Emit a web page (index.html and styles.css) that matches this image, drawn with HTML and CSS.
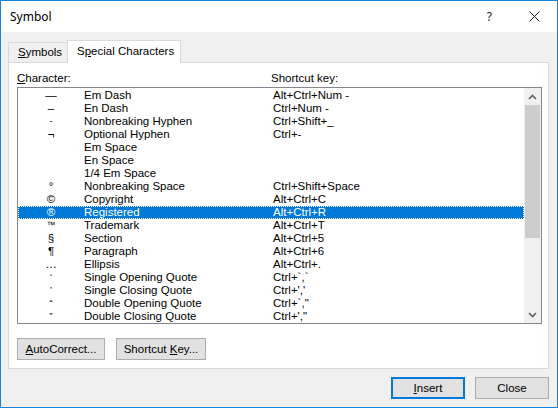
FILE: index.html
```html
<!DOCTYPE html>
<html>
<head>
<meta charset="utf-8">
<link rel="stylesheet" href="styles.css">
</head>
<body>
<div class="dialog">
  <div class="titlebar">
    <span class="title">Symbol</span>
    <span class="help">?</span>
    <svg class="close-x" width="11" height="11" viewBox="0 0 11 11"><path d="M0.5 0.5 L10.5 10.5 M10.5 0.5 L0.5 10.5" stroke="#222" stroke-width="1" fill="none"/></svg>
  </div>
  <div class="body">
    <div class="tabs">
      <div class="tab"><u>S</u>ymbols</div>
      <div class="tab active">S<u>p</u>ecial Characters</div>
    </div>
    <div class="panel">
      <div class="labels">
        <span class="lab-char"><u>C</u>haracter:</span>
        <span class="lab-key">Shortcut key:</span>
      </div>
      <div class="listbox">
        <div class="rows">
          <div class="row"><span class="sym">—</span><span class="name">Em Dash</span><span class="key">Alt+Ctrl+Num -</span></div>
          <div class="row"><span class="sym">–</span><span class="name">En Dash</span><span class="key">Ctrl+Num -</span></div>
          <div class="row"><span class="sym small">-</span><span class="name">Nonbreaking Hyphen</span><span class="key">Ctrl+Shift+_</span></div>
          <div class="row"><span class="sym">¬</span><span class="name">Optional Hyphen</span><span class="key">Ctrl+-</span></div>
          <div class="row"><span class="sym"></span><span class="name">Em Space</span><span class="key"></span></div>
          <div class="row"><span class="sym"></span><span class="name">En Space</span><span class="key"></span></div>
          <div class="row"><span class="sym"></span><span class="name">1/4 Em Space</span><span class="key"></span></div>
          <div class="row"><span class="sym">°</span><span class="name">Nonbreaking Space</span><span class="key">Ctrl+Shift+Space</span></div>
          <div class="row"><span class="sym">©</span><span class="name">Copyright</span><span class="key">Alt+Ctrl+C</span></div>
          <div class="row selected"><span class="sym">®</span><span class="name">Registered</span><span class="key">Alt+Ctrl+R</span></div>
          <div class="row"><span class="sym small">™</span><span class="name">Trademark</span><span class="key">Alt+Ctrl+T</span></div>
          <div class="row"><span class="sym">§</span><span class="name">Section</span><span class="key">Alt+Ctrl+5</span></div>
          <div class="row"><span class="sym">¶</span><span class="name">Paragraph</span><span class="key">Alt+Ctrl+6</span></div>
          <div class="row"><span class="sym">…</span><span class="name">Ellipsis</span><span class="key">Alt+Ctrl+.</span></div>
          <div class="row"><span class="sym small">‘</span><span class="name">Single Opening Quote</span><span class="key">Ctrl+`,`</span></div>
          <div class="row"><span class="sym small">’</span><span class="name">Single Closing Quote</span><span class="key">Ctrl+','</span></div>
          <div class="row"><span class="sym small">“</span><span class="name">Double Opening Quote</span><span class="key">Ctrl+`,"</span></div>
          <div class="row"><span class="sym small">”</span><span class="name">Double Closing Quote</span><span class="key">Ctrl+',"</span></div>
        </div>
        <div class="scrollbar">
          <div class="sb-btn"><svg width="9" height="6" viewBox="0 0 9 6"><path d="M1 5 L4.5 1.5 L8 5" stroke="#606060" stroke-width="1.6" fill="none"/></svg></div>
          <div class="sb-track"><div class="sb-thumb"></div></div>
          <div class="sb-btn"><svg width="9" height="6" viewBox="0 0 9 6"><path d="M1 1 L4.5 4.5 L8 1" stroke="#606060" stroke-width="1.6" fill="none"/></svg></div>
        </div>
      </div>
      <div class="panel-buttons">
        <button class="btn btn-auto"><u>A</u>utoCorrect...</button>
        <button class="btn btn-short">Shortcut <u>K</u>ey...</button>
      </div>
    </div>
    <div class="footer">
      <button class="btn btn-foot default"><u>I</u>nsert</button>
      <button class="btn btn-foot">Close</button>
    </div>
  </div>
</div>
</body>
</html>
```

FILE: styles.css
```css
html, body {
  margin: 0;
  padding: 0;
  background: #ffffff;
}
body {
  font-family: "Liberation Sans", Arial, sans-serif;
  font-size: 11.5px;
  color: #000;
}
u { text-decoration: underline; text-underline-offset: 1px; }

.dialog {
  width: 558px;
  height: 408px;
  box-sizing: border-box;
  border: 1px solid #1883d7;
  display: flex;
  flex-direction: column;
  background: #f0f0f0;
}
.titlebar {
  height: 31px;
  background: #ffffff;
  display: flex;
  align-items: center;
  padding-left: 9px;
  padding-right: 17px;
  flex-shrink: 0;
  font-family: "Noto Sans", sans-serif;
}
.title { font-size: 12px; flex: 1; }
.help { font-size: 12px; margin-right: 37px; color: #222; }
.close-x { display: block; }

.body {
  flex: 1;
  display: flex;
  flex-direction: column;
  padding: 8px 8px 0 7px;
}
.tabs {
  display: flex;
  align-items: flex-end;
  height: 22px;
}
.tab {
  height: 20px;
  box-sizing: border-box;
  border: 1px solid #d9d9d9;
  border-bottom: none;
  padding: 0 6px 0 9px;
  width: 60px;
  line-height: 19px;
  background: #f0f0f0;
}
.tab.active {
  height: 23px;
  width: 114px;
  background: #ffffff;
  margin-left: -1px;
  padding: 0 0 0 9px;
  margin-bottom: -1px;
  position: relative;
  z-index: 1;
  line-height: 21px;
}
.panel {
  background: #ffffff;
  border: 1px solid #d9d9d9;
  height: 307px;
  box-sizing: border-box;
  padding: 7px 6px 0 8px;
  display: flex;
  flex-direction: column;
}
.labels {
  display: flex;
  height: 17px;
  line-height: 17px;
}
.lab-char { width: 254px; }

.listbox {
  border: 1px solid #828790;
  height: 237px;
  box-sizing: border-box;
  display: flex;
  background: #fff;
}
.rows {
  flex: 1;
  padding-top: 1px;
}
.row {
  display: grid;
  grid-template-columns: 66px 189px 1fr;
  height: 13px;
  line-height: 13px;
  white-space: nowrap;
}
.row .sym { text-align: center; }
.row .sym.small { font-size: 9px; }
.row.selected {
  background: #0078d7;
  color: #fff;
  outline: 1px dotted #ffffff;
  outline-offset: -1px;
}
.scrollbar {
  width: 17px;
  background: #f0f0f0;
  display: flex;
  flex-direction: column;
}
.sb-btn {
  height: 17px;
  display: flex;
  align-items: center;
  justify-content: center;
}
.sb-track { flex: 1; }
.sb-thumb {
  height: 133px;
  margin: 0 1px;
  background: #cdcdcd;
}

.panel-buttons {
  display: flex;
  gap: 11px;
  margin-top: 14px;
}
.btn {
  font-family: inherit;
  font-size: 11.5px;
  color: #000;
  background: #e1e1e1;
  border: 1px solid #adadad;
  height: 22px;
  padding: 0;
  box-sizing: border-box;
  line-height: 18px;
}
.btn-auto { width: 88px; }
.btn-short { width: 90px; }

.footer {
  display: flex;
  justify-content: flex-end;
  gap: 10px;
  margin-top: 8px;
}
.btn-foot { width: 74px; }
.btn.default { border: 2px solid #0078d7; }
```
